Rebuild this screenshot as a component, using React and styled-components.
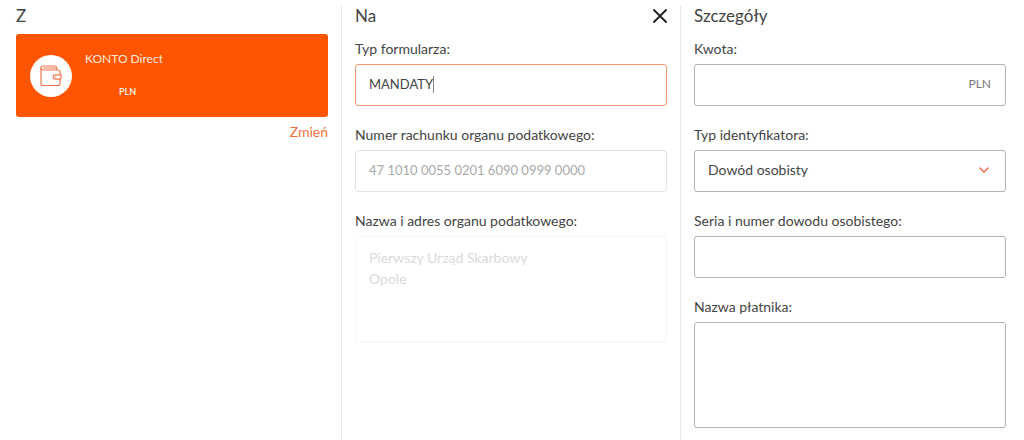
import React from 'react';
import styled, { createGlobalStyle } from 'styled-components';

const GlobalStyle = createGlobalStyle`
  * {
    box-sizing: border-box;
  }
  body {
    margin: 0;
    background: #fff;
    color: #444;
    font-family: Lato, 'Open Sans', sans-serif;
    font-size: 14px;
    line-height: 20px;
  }
  input,
  select,
  textarea,
  button {
    font: inherit;
    color: inherit;
  }
`;

const tones = {
  normal: { border: '#b4b4b4', text: '#444' },
  active: { border: '#f4986f', text: '#444' },
  muted: { border: '#e4e4e4', text: '#aaa' },
  faint: { border: '#f6f6f6', text: '#dadada' },
};

const Page = styled.main`
  display: grid;
  grid-template-columns: repeat(3, 1fr);
  min-height: 100vh;
  padding: 6px 4px 0 3px;
  @media (max-width: 600px) {
    grid-template-columns: 1fr;
  }
`;
const Column = styled.section`
  min-width: 0;
  padding: 0 13px 12px;
  border-right: 1px solid #e6e6e6;
  &:last-child {
    border-color: transparent;
  }
`;
const ColumnHeader = styled.header`
  display: flex;
  justify-content: space-between;
  align-items: center;
  height: 20px;
  margin-bottom: 8px;
`;
const Title = styled.h2`
  margin: 0;
  font-size: 17px;
  font-weight: 400;
`;
const CloseButton = styled.button`
  display: flex;
  padding: 0;
  border: 0;
  background: transparent;
  color: #222;
  cursor: pointer;
`;
const Account = styled.div`
  display: flex;
  align-items: center;
  gap: 13px;
  height: 83px;
  padding: 0 14px;
  border-radius: 3px;
  background: #ff5500;
  color: #ffe9dd;
`;
const AccountIcon = styled.span`
  display: flex;
  justify-content: center;
  align-items: center;
  width: 42px;
  height: 42px;
  border-radius: 50%;
  background: #fff;
`;
const AccountInfo = styled.div`
  display: grid;
  gap: 13px;
`;
const AccountName = styled.span`
  font-size: 12px;
`;
const Currency = styled.span`
  padding-left: 34px;
  font-size: 9px;
  font-weight: 700;
`;
const ChangeRow = styled.div`
  display: flex;
  justify-content: flex-end;
  padding-top: 5px;
`;
const ChangeLink = styled.a`
  color: #f0703c;
  text-decoration: none;
`;
const Form = styled.form`
  display: grid;
  gap: 19px;
  padding-top: 5px;
`;
const FieldGroup = styled.div`
  display: grid;
  gap: 5px;
`;
const Control = styled.div`
  display: flex;
  align-items: center;
  height: ${(props) => (props.$tall ? '106px' : '42px')};
  padding-bottom: 2px;
  border: 1px solid ${(props) => tones[props.$tone || 'normal'].border};
  border-radius: 3px;
  color: ${(props) => tones[props.$tone || 'normal'].text};
`;
const Input = styled.input`
  flex: ${(props) => (props.$fit ? '0 1 auto' : '1')};
  field-sizing: ${(props) => (props.$fit ? 'content' : 'fixed')};
  min-width: 0;
  height: 100%;
  padding: 0 0 0 13px;
  border: 0;
  outline: 0;
  background: transparent;
  font-size: 13px;
`;
const Caret = styled.span`
  width: 1px;
  height: 17px;
  background: #888;
`;
const TextArea = styled.textarea`
  flex: 1;
  min-width: 0;
  height: 100%;
  padding: 10px 13px;
  border: 0;
  outline: 0;
  resize: none;
  background: transparent;
  line-height: 21px;
`;
const Suffix = styled.span`
  padding-right: 14px;
  font-size: 12px;
  color: #777;
`;
const SelectBox = styled(Control)`
  display: grid;
  align-items: center;
  > * {
    grid-area: 1 / 1;
  }
  svg {
    justify-self: end;
    margin-right: 16px;
    pointer-events: none;
  }
`;
const Select = styled.select`
  width: 100%;
  height: 100%;
  padding: 0 13px;
  border: 0;
  outline: 0;
  appearance: none;
  background: transparent;
`;

const WalletIcon = () => (
  <svg
    width='22'
    height='22'
    viewBox='0 0 22 22'
    fill='none'
    stroke='#ef7750'
    strokeWidth='1.2'
    strokeLinecap='round'
    strokeLinejoin='round'
    aria-hidden='true'
  >
    <path d='M16.5 5V2.5A1.5 1.5 0 0 0 15 1H3a2 2 0 0 0 0 4h15a2 2 0 0 1 2 2v2.6' />
    <path d='M1 3v15.5a2 2 0 0 0 2 2h15a2 2 0 0 0 2-2V14' />
    <path d='M3.5 3h12.5' />
    <path d='M21 9.8h-5.6a2.2 2.2 0 0 0 0 4.4H20a1 1 0 0 0 1-1z' />
    <path d='M15.6 12h.3' />
  </svg>
);

const CloseIcon = () => (
  <svg width='14' height='14' viewBox='0 0 14 14' aria-hidden='true'>
    <path
      d='M1 1l12 12M13 1L1 13'
      fill='none'
      stroke='currentColor'
      strokeWidth='1.9'
      strokeLinecap='round'
    />
  </svg>
);

const ChevronIcon = () => (
  <svg width='10' height='6' viewBox='0 0 10 6' aria-hidden='true'>
    <path
      d='M1 1l4 4 4-4'
      fill='none'
      stroke='#ef6a45'
      strokeWidth='1.5'
      strokeLinecap='round'
      strokeLinejoin='round'
    />
  </svg>
);

const Field = ({ id, label, children }) => (
  <FieldGroup>
    <label htmlFor={id}>{label}</label>
    {children}
  </FieldGroup>
);

const App = () => {
  return (
    <>
      <GlobalStyle />
      <Page>
        <Column>
          <ColumnHeader>
            <Title>Z</Title>
          </ColumnHeader>
          <Account>
            <AccountIcon>
              <WalletIcon />
            </AccountIcon>
            <AccountInfo>
              <AccountName>KONTO Direct</AccountName>
              <Currency>PLN</Currency>
            </AccountInfo>
          </Account>
          <ChangeRow>
            <ChangeLink href='#account'>Zmień</ChangeLink>
          </ChangeRow>
        </Column>
        <Column>
          <ColumnHeader>
            <Title>Na</Title>
            <CloseButton type='button' aria-label='Zamknij'>
              <CloseIcon />
            </CloseButton>
          </ColumnHeader>
          <Form>
            <Field id='form-type' label='Typ formularza:'>
              <Control $tone='active'>
                <Input id='form-type' $fit defaultValue='MANDATY' />
                <Caret />
              </Control>
            </Field>
            <Field id='account' label='Numer rachunku organu podatkowego:'>
              <Control $tone='muted'>
                <Input
                  id='account'
                  readOnly
                  value='47 1010 0055 0201 6090 0999 0000'
                />
              </Control>
            </Field>
            <Field id='office' label='Nazwa i adres organu podatkowego:'>
              <Control $tone='faint' $tall>
                <TextArea
                  id='office'
                  readOnly
                  value={'Pierwszy Urząd Skarbowy\nOpole'}
                />
              </Control>
            </Field>
          </Form>
        </Column>
        <Column>
          <ColumnHeader>
            <Title>Szczegóły</Title>
          </ColumnHeader>
          <Form>
            <Field id='amount' label='Kwota:'>
              <Control>
                <Input id='amount' />
                <Suffix>PLN</Suffix>
              </Control>
            </Field>
            <Field id='id-type' label='Typ identyfikatora:'>
              <SelectBox>
                <Select id='id-type'>
                  <option>Dowód osobisty</option>
                </Select>
                <ChevronIcon />
              </SelectBox>
            </Field>
            <Field id='id-number' label='Seria i numer dowodu osobistego:'>
              <Control>
                <Input id='id-number' />
              </Control>
            </Field>
            <Field id='payer' label='Nazwa płatnika:'>
              <Control $tall>
                <TextArea id='payer' />
              </Control>
            </Field>
          </Form>
        </Column>
      </Page>
    </>
  );
};

export default App;
